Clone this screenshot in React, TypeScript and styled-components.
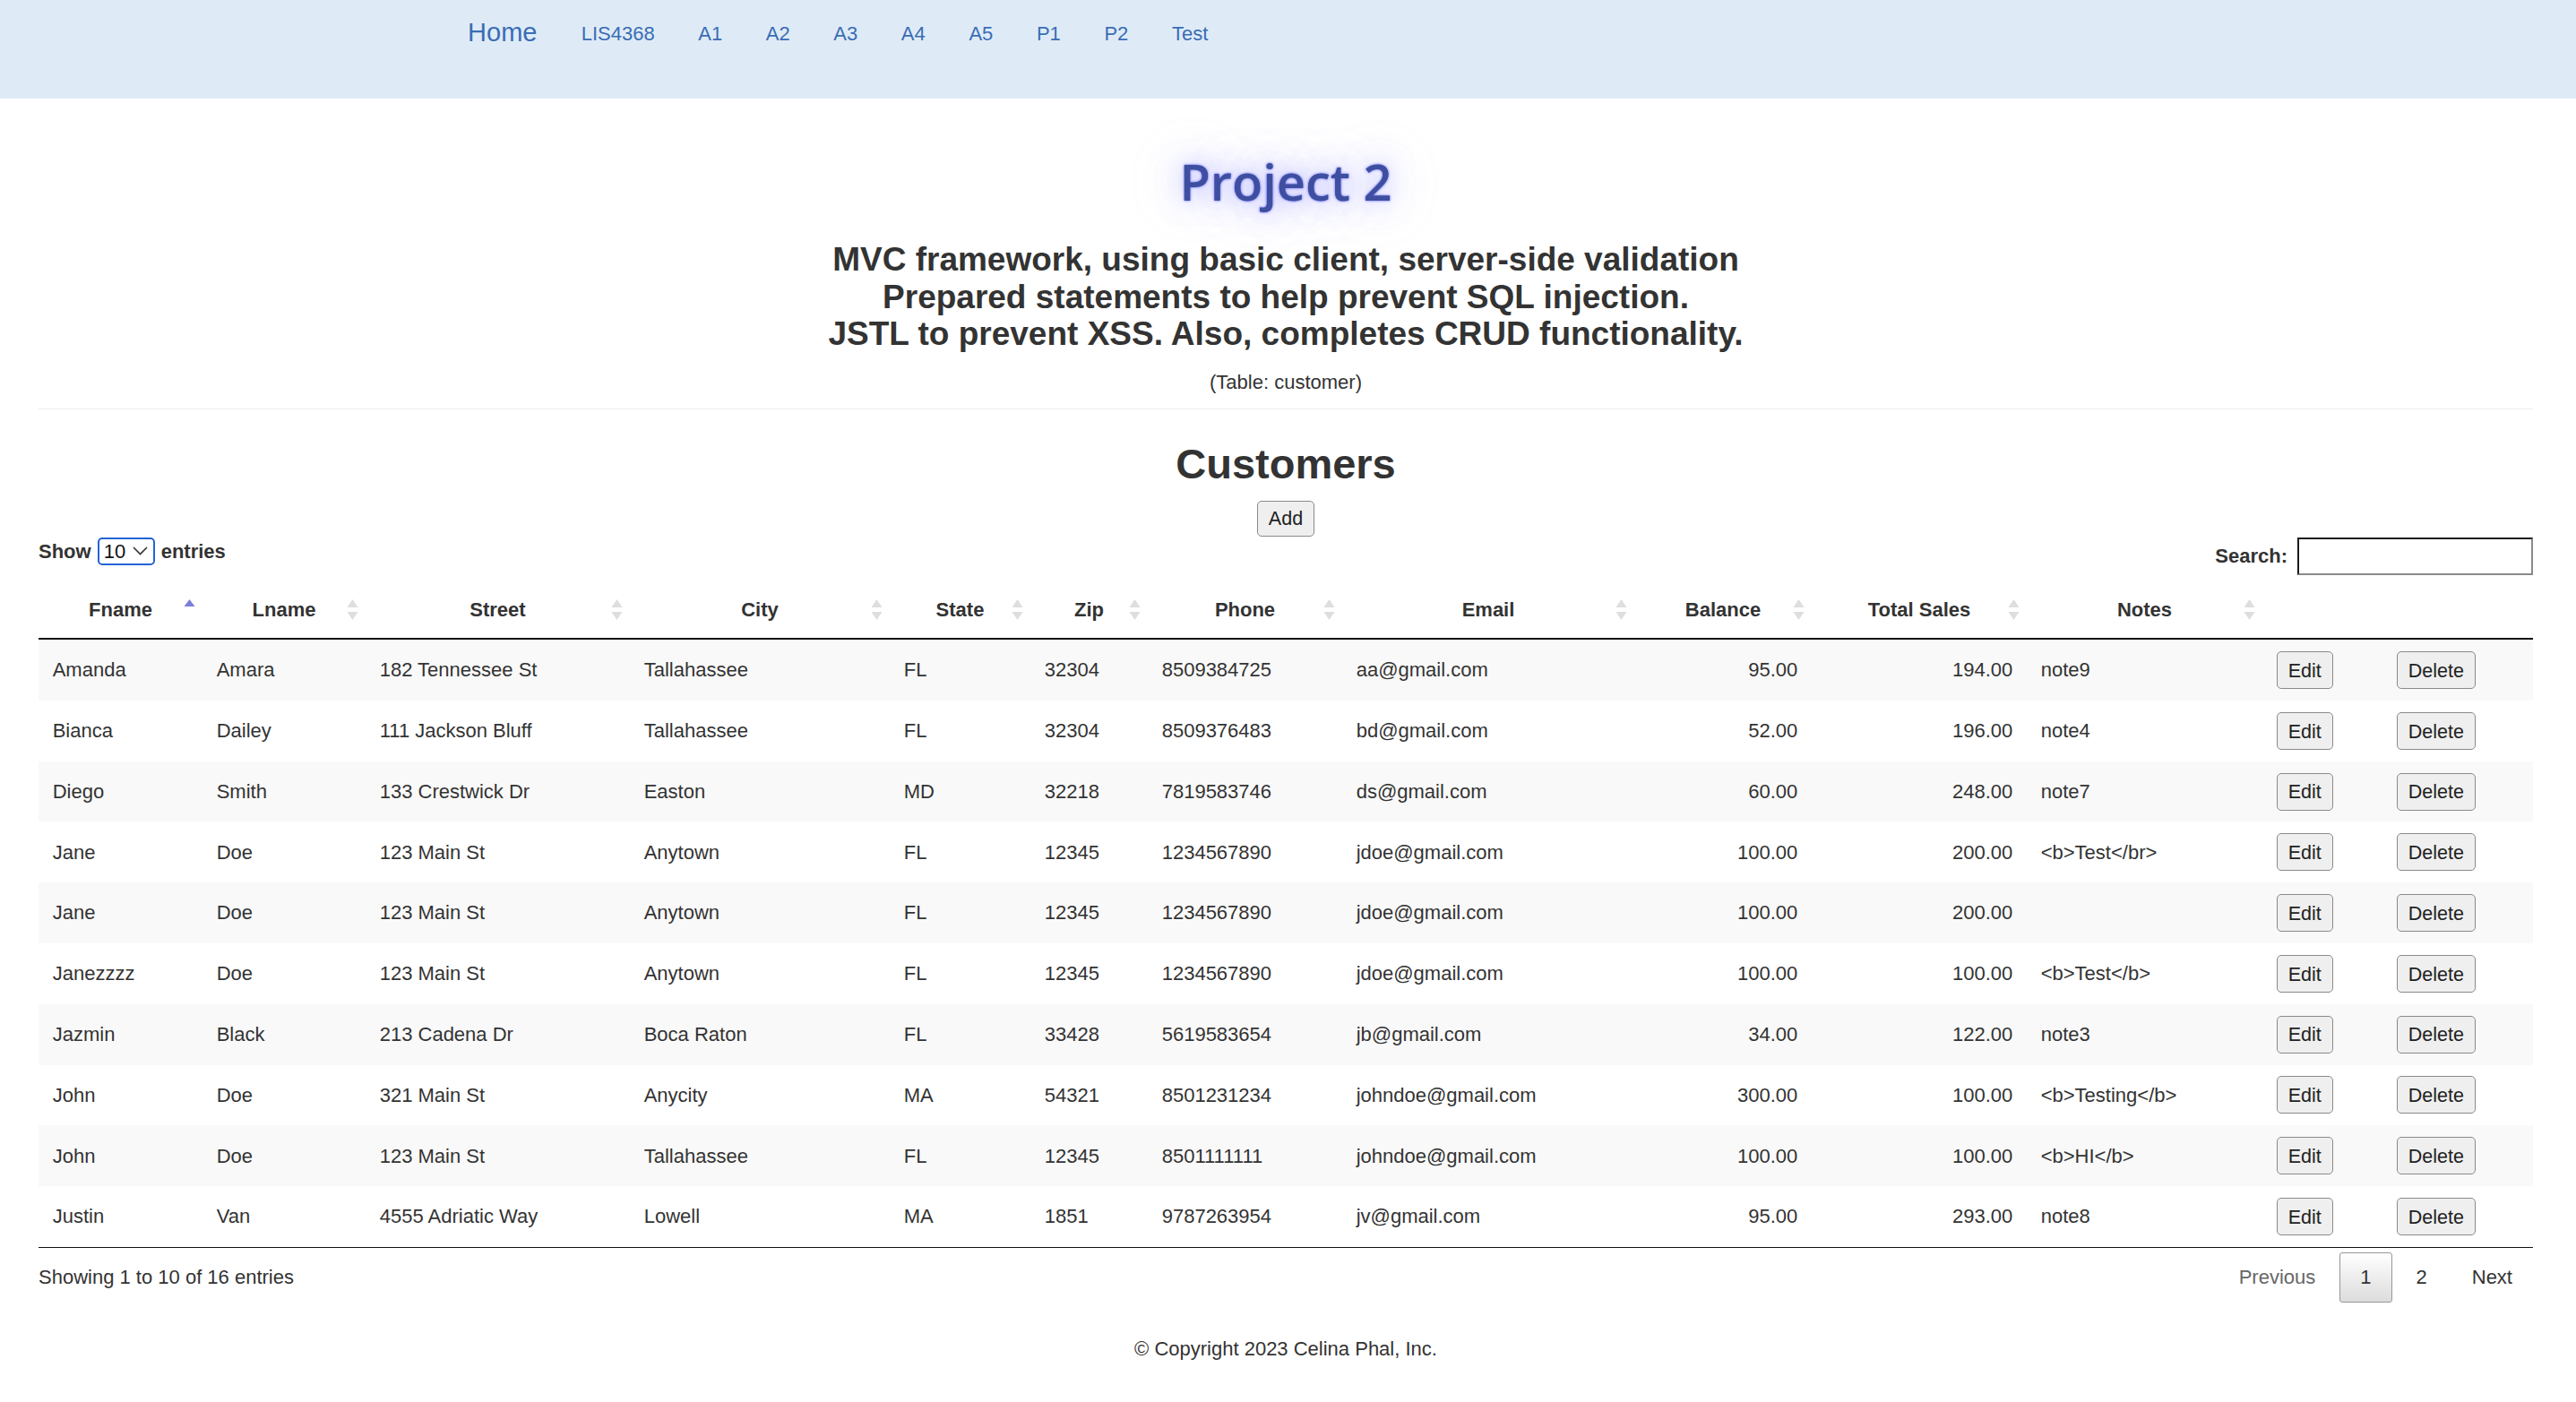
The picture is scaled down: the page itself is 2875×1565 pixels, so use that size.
import React from "react";
import styled, { createGlobalStyle } from "styled-components";

const GlobalStyle = createGlobalStyle`
  html, body {
    margin: 0;
    padding: 0;
    background: #fff;
  }
  body {
    font-family: "Liberation Sans", Arial, Helvetica, sans-serif;
    font-size: 22px;
    line-height: 31.4px;
    color: #333;
  }
`;

type Customer = {
  fname: string;
  lname: string;
  street: string;
  city: string;
  state: string;
  zip: string;
  phone: string;
  email: string;
  balance: string;
  sales: string;
  notes: string;
};

const customers: Customer[] = [
  { fname: "Amanda", lname: "Amara", street: "182 Tennessee St", city: "Tallahassee", state: "FL", zip: "32304", phone: "8509384725", email: "aa@gmail.com", balance: "95.00", sales: "194.00", notes: "note9" },
  { fname: "Bianca", lname: "Dailey", street: "111 Jackson Bluff", city: "Tallahassee", state: "FL", zip: "32304", phone: "8509376483", email: "bd@gmail.com", balance: "52.00", sales: "196.00", notes: "note4" },
  { fname: "Diego", lname: "Smith", street: "133 Crestwick Dr", city: "Easton", state: "MD", zip: "32218", phone: "7819583746", email: "ds@gmail.com", balance: "60.00", sales: "248.00", notes: "note7" },
  { fname: "Jane", lname: "Doe", street: "123 Main St", city: "Anytown", state: "FL", zip: "12345", phone: "1234567890", email: "jdoe@gmail.com", balance: "100.00", sales: "200.00", notes: "<b>Test</br>" },
  { fname: "Jane", lname: "Doe", street: "123 Main St", city: "Anytown", state: "FL", zip: "12345", phone: "1234567890", email: "jdoe@gmail.com", balance: "100.00", sales: "200.00", notes: "" },
  { fname: "Janezzzz", lname: "Doe", street: "123 Main St", city: "Anytown", state: "FL", zip: "12345", phone: "1234567890", email: "jdoe@gmail.com", balance: "100.00", sales: "100.00", notes: "<b>Test</b>" },
  { fname: "Jazmin", lname: "Black", street: "213 Cadena Dr", city: "Boca Raton", state: "FL", zip: "33428", phone: "5619583654", email: "jb@gmail.com", balance: "34.00", sales: "122.00", notes: "note3" },
  { fname: "John", lname: "Doe", street: "321 Main St", city: "Anycity", state: "MA", zip: "54321", phone: "8501231234", email: "johndoe@gmail.com", balance: "300.00", sales: "100.00", notes: "<b>Testing</b>" },
  { fname: "John", lname: "Doe", street: "123 Main St", city: "Tallahassee", state: "FL", zip: "12345", phone: "8501111111", email: "johndoe@gmail.com", balance: "100.00", sales: "100.00", notes: "<b>HI</b>" },
  { fname: "Justin", lname: "Van", street: "4555 Adriatic Way", city: "Lowell", state: "MA", zip: "1851", phone: "9787263954", email: "jv@gmail.com", balance: "95.00", sales: "293.00", notes: "note8" },
];

const columns = [
  { label: "Fname", width: 183, sort: "asc" },
  { label: "Lname", width: 182, sort: "both" },
  { label: "Street", width: 295, sort: "both" },
  { label: "City", width: 290, sort: "both" },
  { label: "State", width: 157, sort: "both" },
  { label: "Zip", width: 131, sort: "both" },
  { label: "Phone", width: 217, sort: "both" },
  { label: "Email", width: 326, sort: "both" },
  { label: "Balance", width: 198, sort: "both" },
  { label: "Total Sales", width: 240, sort: "both" },
  { label: "Notes", width: 263, sort: "both" },
  { label: "", width: 134, sort: "" },
  { label: "", width: 168, sort: "" },
];

const navLinks = ["LIS4368", "A1", "A2", "A3", "A4", "A5", "P1", "P2", "Test"];

/* ---------- navbar ---------- */

const NavBar = styled.nav`
  height: 110px;
  background: #deebf7;
`;

const NavInner = styled.div`
  width: 1878px;
  margin: 0 auto;
  display: flex;
  align-items: flex-start;
`;

const Brand = styled.a`
  padding: 21px 25px 0 23.6px;
  font-size: 29px;
  line-height: 31.4px;
  color: #3a6db3;
  text-decoration: none;
`;

const NavLink = styled.a`
  padding: 22px 24.3px 0;
  font-size: 22px;
  line-height: 31.4px;
  color: #3a6db3;
  text-decoration: none;
`;

/* ---------- heading block ---------- */

const Main = styled.main`
  padding: 0 48px 0 43px;
`;

const Title = styled.h1`
  margin: 61px 0 0;
  text-align: center;
  font-family: "Open Sans", "Liberation Sans", sans-serif;
  font-weight: 600;
  font-size: 56px;
  line-height: 62px;
  color: #3f4f9f;
  text-shadow: 0 0 3px #5a5aff, 0 0 28px rgba(120, 120, 255, 0.55),
    0 0 60px rgba(160, 160, 255, 0.45);
`;

const Subtitle = styled.h3`
  margin: 36px 0 0;
  text-align: center;
  font-weight: bold;
  font-size: 37px;
  line-height: 41.5px;
  color: #333;
`;

const TableNote = styled.p`
  margin: 17px 0 0;
  text-align: center;
  font-size: 22px;
`;

const Rule = styled.hr`
  margin: 14px 0 0;
  border: 0;
  border-top: 1px solid #eee;
`;

const SectionTitle = styled.h2`
  margin: 35px 0 0;
  text-align: center;
  font-weight: bold;
  font-size: 47px;
  line-height: 51.8px;
  color: #333;
`;

const Centered = styled.div`
  display: flex;
  justify-content: center;
  margin-top: 15px;
`;

const Button = styled.button<{ $block?: boolean }>`
  display: ${(p) => (p.$block ? "block" : "inline-block")};
  box-sizing: border-box;
  height: ${(p) => (p.$block ? "42px" : "40px")};
  padding: 3px 12px 0;
  border: 1px solid #8a8a8a;
  border-radius: 5px;
  background: #efefef;
  font-family: "Liberation Sans", Arial, sans-serif;
  font-size: 21.5px;
  line-height: 1;
  color: #222;
`;

/* ---------- table controls ---------- */

const Controls = styled.div`
  display: flex;
  justify-content: space-between;
  align-items: flex-start;
  margin-top: 1px;
`;

const LengthLabel = styled.div`
  display: flex;
  align-items: center;
  gap: 7px;
  height: 31px;
  font-weight: bold;
`;

const FakeSelect = styled.div`
  box-sizing: border-box;
  width: 64px;
  height: 31px;
  display: flex;
  align-items: center;
  justify-content: space-between;
  padding: 0 6px 0 5px;
  border: 2px solid #2463d6;
  border-radius: 5px;
  font-weight: normal;
  color: #111;
`;

const FilterLabel = styled.div`
  display: flex;
  align-items: center;
  gap: 11px;
  height: 42px;
  font-weight: bold;
`;

const SearchInput = styled.input`
  box-sizing: border-box;
  width: 263px;
  height: 42px;
  border-style: solid;
  border-width: 2px;
  border-color: #1b1b1b #8a8a8a #8a8a8a #1b1b1b;
  background: #fff;
  outline: none;
`;

/* ---------- table ---------- */

const Table = styled.table`
  width: 100%;
  margin-top: 8px;
  table-layout: fixed;
  border-collapse: separate;
  border-spacing: 0;
  border-bottom: 1px solid #111;
`;

const HeadCell = styled.th`
  position: relative;
  padding: 15.5px 16px;
  text-align: center;
  font-weight: bold;
  color: #333;
  border-bottom: 2px solid #111;
  white-space: nowrap;
`;

const SortMark = styled.svg`
  position: absolute;
  right: 8px;
  top: 50%;
  margin-top: -11.5px;
`;

const BodyRow = styled.tr<{ $odd: boolean }>`
  background: ${(p) => (p.$odd ? "#f9f9f9" : "#fff")};
  & + & td {
    border-top: 1px solid #ddd;
  }
`;

const Cell = styled.td<{ $right?: boolean }>`
  padding: 12.9px 15.7px;
  vertical-align: middle;
  text-align: ${(p) => (p.$right ? "right" : "left")};
  white-space: nowrap;
  color: #333;
`;

/* ---------- table footer ---------- */

const TableFooter = styled.div`
  display: flex;
  justify-content: space-between;
  align-items: flex-start;
`;

const Info = styled.div`
  padding-top: 16.6px;
`;

const Paginate = styled.div`
  display: flex;
  gap: 4px;
  padding-top: 5.5px;
`;

const PageButton = styled.span<{ $current?: boolean; $disabled?: boolean }>`
  box-sizing: border-box;
  padding: 11px 22px;
  border: 1px solid ${(p) => (p.$current ? "#979797" : "transparent")};
  border-radius: 3px;
  background: ${(p) =>
    p.$current ? "linear-gradient(to bottom, #fff 0%, #dcdcdc 100%)" : "transparent"};
  color: ${(p) => (p.$disabled ? "#666" : "#333")};
`;

const Copyright = styled.p`
  margin: 36px 0 0;
  padding-bottom: 40px;
  text-align: center;
`;

const SortIcon = ({ kind }: { kind: string }) => (
  <SortMark width="13" height="23" viewBox="0 0 13 23">
    {kind === "asc" ? (
      <path d="M6.5 0 L12.5 8 L0.5 8 Z" fill="#7b7fda" />
    ) : (
      <>
        <path d="M6.5 0 L12.5 9 L0.5 9 Z" fill="#dedede" />
        <path d="M0.5 14 L12.5 14 L6.5 23 Z" fill="#dedede" />
      </>
    )}
  </SortMark>
);

const App = () => {
  return (
    <>
      <GlobalStyle />
      <NavBar>
        <NavInner>
          <Brand>Home</Brand>
          {navLinks.map((l) => (
            <NavLink key={l}>{l}</NavLink>
          ))}
        </NavInner>
      </NavBar>

      <Main>
        <Title>Project 2</Title>
        <Subtitle>
          MVC framework, using basic client, server-side validation
          <br />
          Prepared statements to help prevent SQL injection.
          <br />
          JSTL to prevent XSS. Also, completes CRUD functionality.
        </Subtitle>
        <TableNote>(Table: customer)</TableNote>
        <Rule />

        <SectionTitle>Customers</SectionTitle>
        <Centered>
          <Button>Add</Button>
        </Centered>

        <Controls>
          <LengthLabel>
            Show
            <FakeSelect>
              <span>10</span>
              <svg width="17" height="10" viewBox="0 0 17 10">
                <path d="M1 1 L8.5 8.5 L16 1" fill="none" stroke="#333" strokeWidth="1.6" />
              </svg>
            </FakeSelect>
            entries
          </LengthLabel>
          <FilterLabel>
            Search:
            <SearchInput type="search" />
          </FilterLabel>
        </Controls>

        <Table>
          <colgroup>
            {columns.map((c, i) => (
              <col key={i} style={{ width: c.width }} />
            ))}
          </colgroup>
          <thead>
            <tr>
              {columns.map((c, i) => (
                <HeadCell key={i}>
                  {c.label}
                  {c.sort && <SortIcon kind={c.sort} />}
                </HeadCell>
              ))}
            </tr>
          </thead>
          <tbody>
            {customers.map((r, i) => (
              <BodyRow key={i} $odd={i % 2 === 0}>
                <Cell>{r.fname}</Cell>
                <Cell>{r.lname}</Cell>
                <Cell>{r.street}</Cell>
                <Cell>{r.city}</Cell>
                <Cell>{r.state}</Cell>
                <Cell>{r.zip}</Cell>
                <Cell>{r.phone}</Cell>
                <Cell>{r.email}</Cell>
                <Cell $right>{r.balance}</Cell>
                <Cell $right>{r.sales}</Cell>
                <Cell>{r.notes}</Cell>
                <Cell>
                  <Button $block>Edit</Button>
                </Cell>
                <Cell>
                  <Button $block>Delete</Button>
                </Cell>
              </BodyRow>
            ))}
          </tbody>
        </Table>

        <TableFooter>
          <Info>Showing 1 to 10 of 16 entries</Info>
          <Paginate>
            <PageButton $disabled>Previous</PageButton>
            <PageButton $current>1</PageButton>
            <PageButton>2</PageButton>
            <PageButton>Next</PageButton>
          </Paginate>
        </TableFooter>

        <Copyright>© Copyright 2023 Celina Phal, Inc.</Copyright>
      </Main>
    </>
  );
};

export default App;
